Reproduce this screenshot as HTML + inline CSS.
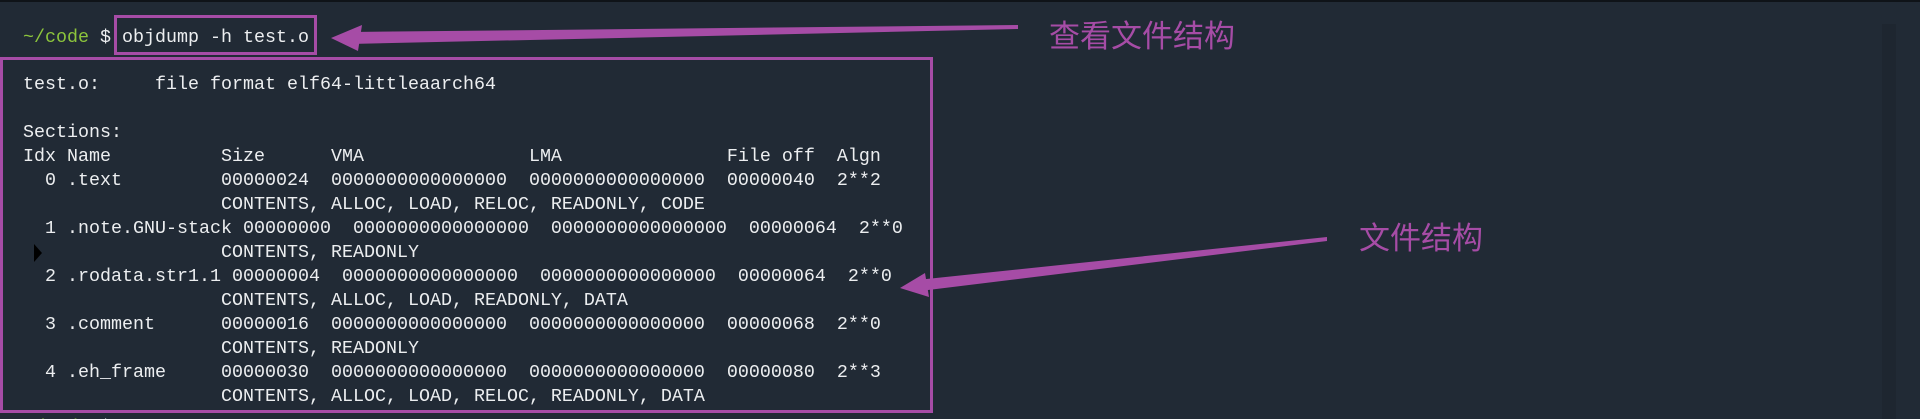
<!DOCTYPE html>
<html><head><meta charset="utf-8"><style>
html,body{margin:0;padding:0;overflow:hidden;height:419px}
body{width:1920px;height:419px;background:#212a35;position:relative;overflow:hidden;font-family:"Liberation Mono",monospace;}
.top{position:absolute;left:0;top:0;width:1920px;height:2px;background:#0f1318}
.sb{position:absolute;left:1882px;top:24px;width:14px;height:395px;background:#1e2630}
pre{margin:0;position:absolute;left:23px;font-family:"Liberation Mono",monospace;font-size:18.33px;line-height:24px;color:#eceef0;white-space:pre}
.g{color:#8cc43c}
.box{position:absolute;border:3px solid #a64ca6;box-sizing:border-box}
.cn{position:absolute;color:#a64ca6;font-family:"Noto Sans CJK SC",sans-serif;font-size:31px;line-height:1;}
</style></head><body>
<div class="top"></div>
<div class="sb"></div>
<pre style="top:26px"><span class="g">~/code</span> $ objdump -h test.o</pre>
<pre style="top:73px">test.o:     file format elf64-littleaarch64

Sections:
Idx Name          Size      VMA               LMA               File off  Algn
  0 .text         00000024  0000000000000000  0000000000000000  00000040  2**2
                  CONTENTS, ALLOC, LOAD, RELOC, READONLY, CODE
  1 .note.GNU-stack 00000000  0000000000000000  0000000000000000  00000064  2**0
                  CONTENTS, READONLY
  2 .rodata.str1.1 00000004  0000000000000000  0000000000000000  00000064  2**0
                  CONTENTS, ALLOC, LOAD, READONLY, DATA
  3 .comment      00000016  0000000000000000  0000000000000000  00000068  2**0
                  CONTENTS, READONLY
  4 .eh_frame     00000030  0000000000000000  0000000000000000  00000080  2**3
                  CONTENTS, ALLOC, LOAD, RELOC, READONLY, DATA</pre>
<div style="position:absolute;left:0;top:413px;width:200px;height:6px;overflow:hidden">
<pre style="top:3px;left:23px"><span class="g">~/code</span> $</pre>
</div>
<div class="box" style="left:114px;top:15px;width:203px;height:40px"></div>
<div class="box" style="left:0;top:57px;width:933px;height:356px;background:transparent"></div>
<svg style="position:absolute;left:0;top:0" width="1920" height="419">
<polygon points="34,244 42,253 34,262" fill="#000"/>
<polygon points="1018,25 1018,29 350,44 350,32" fill="#a64ca6"/>
<polygon points="331,38 362,25 358,51" fill="#a64ca6"/>
<polygon points="1327,237 1327,241 920,291 917,280" fill="#a64ca6"/>
<polygon points="900,288 925,273 929,297" fill="#a64ca6"/>
</svg>
<div class="cn" style="left:1049px;top:18px">查看文件结构</div>
<div class="cn" style="left:1359px;top:220px">文件结构</div>
</body></html>
